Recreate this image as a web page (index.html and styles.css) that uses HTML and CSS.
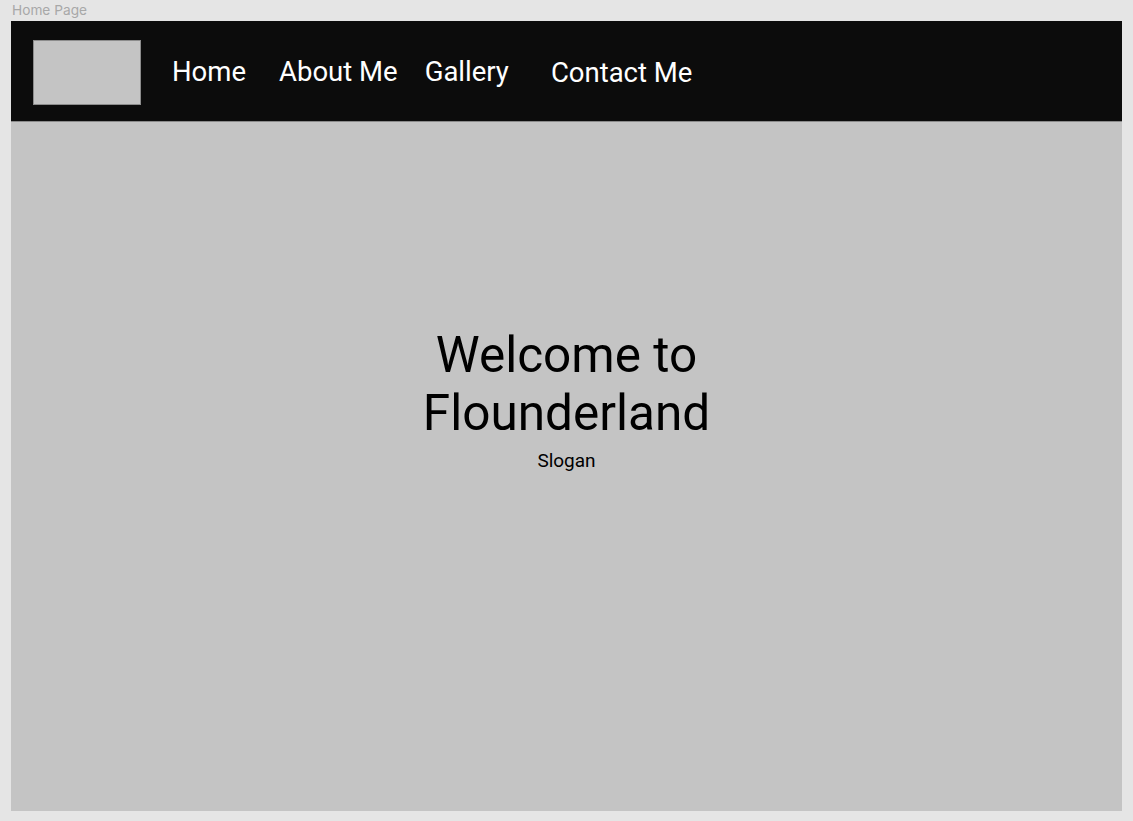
FILE: index.html
```html
<!DOCTYPE html>
<html>
<head>
<meta charset="utf-8">
<link rel="stylesheet" href="styles.css">
</head>
<body>
<div class="label">Home Page</div>
<div class="frame">
  <header class="header">
    <div class="logo"></div>
    <nav class="nav">
      <a class="nav-link home">Home</a>
      <a class="nav-link about">About Me</a>
      <a class="nav-link gallery">Gallery</a>
      <a class="nav-link contact">Contact Me</a>
    </nav>
  </header>
  <main class="hero">
    <h1 class="title">Welcome to<br>Flounderland</h1>
    <p class="slogan">Slogan</p>
  </main>
</div>
</body>
</html>
```

FILE: styles.css
```css
html, body {
  margin: 0;
  padding: 0;
}
body {
  background: #e5e5e5;
  width: 1133px;
  height: 821px;
  overflow: hidden;
  font-family: Roboto, "Liberation Sans", sans-serif;
}
.label {
  font-family: Inter, "Liberation Sans", sans-serif;
  font-size: 13.7px;
  line-height: 17px;
  color: #a8a8a8;
  padding: 2px 0 0 12px;
  height: 19px;
}
.frame {
  margin-left: 11px;
  width: 1111px;
  height: 790px;
  background: #c4c4c4;
  display: flex;
  flex-direction: column;
}
.header {
  height: 101px;
  flex: none;
  background: #0c0c0c;
  border-bottom: 1px solid #8a8a8a;
  box-sizing: border-box;
  display: flex;
  align-items: flex-start;
  padding: 19px 0 0 22px;
}
.logo {
  width: 106px;
  height: 63px;
  background: #c4c4c4;
  border: 1px solid #8c8c8c;
}
.nav {
  display: flex;
  align-items: flex-start;
  padding-top: 14px;
}
.nav-link {
  color: #ffffff;
  font-size: 27.5px;
  line-height: 36px;
  text-decoration: none;
}
.home { margin-left: 31px; }
.about { margin-left: 33px; }
.gallery { margin-left: 27px; }
.contact { margin-left: 42px; margin-top: 1px; }
.hero {
  flex: 1;
  display: flex;
  flex-direction: column;
  align-items: center;
  padding-top: 204px;
}
.title {
  margin: 0;
  font-weight: 400;
  font-size: 49.5px;
  line-height: 58px;
  color: #000;
  text-align: center;
}
.slogan {
  margin: 8px 0 0;
  font-size: 19px;
  line-height: 22px;
  color: #000;
}
```
